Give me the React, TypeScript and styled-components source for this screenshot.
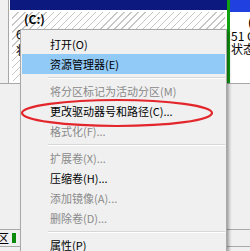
import React from "react";
import styled, { createGlobalStyle } from "styled-components";

const Global = createGlobalStyle`
  html, body { margin: 0; padding: 0; background: #f0f0f0; overflow: hidden; }
  body { font-family: "Noto Sans CJK SC", "Noto Sans", sans-serif; }
  #root { width: 250px; height: 251px; }
`;

const Screen = styled.div`
  position: relative;
  width: 250px;
  height: 251px;
  overflow: hidden;
  background: #f0f0f0;
  display: flex;
  flex-direction: column;
`;

const DiskRow = styled.div`
  flex: none;
  height: 83px;
  display: flex;
  border-bottom: 1px solid #a8a8a8;
  background: #f0f0f0;
`;

const DiskLabel = styled.div`
  flex: none;
  width: 8px;
  background: #f0f0f0;
  border-right: 1px solid #a8a8a8;
`;

const Volume = styled.div<{ $width?: number; $frame: string }>`
  flex: ${(p) => (p.$width ? "none" : "1")};
  width: ${(p) => (p.$width ? `${p.$width}px` : "auto")};
  display: flex;
  flex-direction: column;
  border-left: ${(p) => p.$frame};
  background: #fff;
  min-width: 0;
`;

const VolumeHeader = styled.div<{ $color: string; $h: number }>`
  flex: none;
  height: ${(p) => p.$h}px;
  background: ${(p) => p.$color};
`;

const VolumeBody = styled.div<{ $hatched?: boolean; $pad: string; $lh: number }>`
  flex: 1;
  margin: ${(p) => (p.$hatched ? "2px" : "0")};
  padding: ${(p) => p.$pad};
  background: ${(p) =>
    p.$hatched
      ? "repeating-linear-gradient(135deg, #ffffff 0 4px, #c6c6c6 4px 5px)"
      : "#ffffff"};
  color: #000;
  font-size: 12px;
  line-height: ${(p) => p.$lh}px;
  white-space: nowrap;
  overflow: hidden;
`;

const VolumeName = styled.div<{ $indent: number }>`
  font-weight: bold;
  line-height: 14px;
  padding-left: ${(p) => p.$indent}px;
`;

const VolumeInfo = styled.div``;

const Filler = styled.div`
  flex: 1;
`;

const LegendBar = styled.div`
  flex: none;
  height: 16px;
  display: flex;
  align-items: center;
  border-top: 1px solid #a8a8a8;
  border-bottom: 1px solid #a8a8a8;
  font-size: 12px;
  color: #000;
`;

const LegendText = styled.span`
  margin-left: -3px;
  line-height: 16px;
`;

const Swatch = styled.span`
  display: inline-block;
  width: 4px;
  height: 10px;
  margin-left: 3px;
  background: #0a8a0a;
`;

const Footer = styled.div`
  flex: none;
  height: 4px;
`;

const Menu = styled.div`
  position: absolute;
  left: 20px;
  top: 29px;
  width: 207px;
  box-sizing: border-box;
  border: 1px solid #a8a8a8;
  background: #f0f0f0;
  padding: 4px 1px;
  box-shadow: 2px 2px 3px rgba(0, 0, 0, 0.35);
  font-size: 11px;
`;

const MenuItem = styled.div<{ $disabled?: boolean; $active?: boolean }>`
  height: 20px;
  display: flex;
  align-items: center;
  padding-left: 28px;
  color: ${(p) => (p.$disabled ? "#8a8a8a" : "#000")};
  background: ${(p) => (p.$active ? "#91c9f7" : "transparent")};
  white-space: nowrap;
`;

const Separator = styled.div`
  height: 7px;
  display: flex;
  align-items: center;
  &::after {
    content: "";
    flex: 1;
    margin-left: 26px;
    border-top: 1px solid #d7d7d7;
    border-bottom: 1px solid #ffffff;
  }
`;

const Annotation = styled.svg`
  position: absolute;
  left: 0;
  top: 0;
  pointer-events: none;
`;

type Entry = { label?: string; disabled?: boolean; active?: boolean; sep?: boolean };

const entries: Entry[] = [
  { label: "打开(O)" },
  { label: "资源管理器(E)", active: true },
  { sep: true },
  { label: "将分区标记为活动分区(M)", disabled: true },
  { label: "更改驱动器号和路径(C)..." },
  { label: "格式化(F)...", disabled: true },
  { sep: true },
  { label: "扩展卷(X)...", disabled: true },
  { label: "压缩卷(H)..." },
  { label: "添加镜像(A)...", disabled: true },
  { label: "删除卷(D)...", disabled: true },
  { sep: true },
  { label: "属性(P)" },
];

export default function App() {
  return (
    <>
      <Global />
      <Screen>
        <DiskRow>
          <DiskLabel />
          <Volume $width={217} $frame="1px solid #ffffff">
            <VolumeHeader $color="#0c1a80" $h={10} />
            <VolumeBody $hatched $pad="0 0 0 4px" $lh={16}>
              <VolumeName $indent={8}>(C:)</VolumeName>
              <VolumeInfo>60.00 GB NTFS</VolumeInfo>
              <VolumeInfo>状态良好 (系统, 启动, 活动, 主分区)</VolumeInfo>
            </VolumeBody>
          </Volume>
          <Volume $frame="3px solid #10a010">
            <VolumeHeader $color="#2040e0" $h={12} />
            <VolumeBody $pad="3px 0 0 1px" $lh={13}>
              <VolumeName $indent={17}>(D:)</VolumeName>
              <VolumeInfo>51 GB NTFS</VolumeInfo>
              <VolumeInfo>状态良好 (逻辑驱动器)</VolumeInfo>
            </VolumeBody>
          </Volume>
        </DiskRow>
        <Filler />
        <LegendBar>
          <LegendText>区</LegendText>
          <Swatch />
        </LegendBar>
        <Footer />

        <Menu>
          {entries.map((e, i) =>
            e.sep ? (
              <Separator key={i} />
            ) : (
              <MenuItem key={i} $disabled={e.disabled} $active={e.active}>
                {e.label}
              </MenuItem>
            )
          )}
        </Menu>

        <Annotation width={250} height={251} viewBox="0 0 250 251">
          <ellipse
            cx={117}
            cy={113}
            rx={95}
            ry={13}
            fill="none"
            stroke="#e3262b"
            strokeWidth={2.2}
          />
        </Annotation>
      </Screen>
    </>
  );
}
